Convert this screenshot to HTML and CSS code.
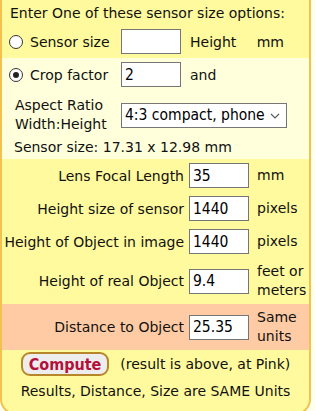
FILE: index.html
```html
<!DOCTYPE html>
<html lang="en">

<head>
    <meta charset="UTF-8">
    <meta name="viewport" content="width=device-width, initial-scale=1.0">
    <title>Distance to Object</title>
    <link rel="stylesheet" href="styles.css">
</head>

<body>
    <form class="calc" autocomplete="off">
        <div class="opts">
            <p class="intro">Enter One of these sensor size options:</p>
            <div class="opt_row">
                <input type="radio" name="mode" class="radio" id="mode_size">
                <label for="mode_size">Sensor size</label>
                <input type="text" class="num" id="sensor_h">
                <span>Height <span class="mm">mm</span></span>
            </div>
        </div>
        <div class="crop">
            <div class="opt_row">
                <input type="radio" name="mode" class="radio" id="mode_crop" checked>
                <label for="mode_crop">Crop factor</label>
                <input type="text" class="num" id="crop" value="2">
                <span>and</span>
            </div>
            <div class="aspect_row">
                <span class="aspect_label">Aspect Ratio<br>Width:Height</span>
                <span class="sel_wrap">
                    <select id="aspect" class="sel">
                        <option>4:3 compact, phone</option>
                        <option>3:2 DSLR</option>
                        <option>16:9 video</option>
                    </select>
                    <svg class="chev" width="10" height="6" viewBox="0 0 10 6"><path d="M1 1 L5 5 L9 1" fill="none" stroke="#555" stroke-width="1.1"/></svg>
                </span>
            </div>
            <p class="sensor_out">Sensor size: 17.31 x 12.98 mm</p>
        </div>
        <table class="calc_table">
            <tr>
                <td class="lbl">Lens Focal Length</td>
                <td class="inp"><input type="text" class="num" value="35"></td>
                <td class="unit">mm</td>
            </tr>
            <tr>
                <td class="lbl">Height size of sensor</td>
                <td class="inp"><input type="text" class="num" value="1440"></td>
                <td class="unit">pixels</td>
            </tr>
            <tr>
                <td class="lbl">Height of Object in image</td>
                <td class="inp"><input type="text" class="num" value="1440"></td>
                <td class="unit">pixels</td>
            </tr>
            <tr class="tall">
                <td class="lbl">Height of real Object</td>
                <td class="inp"><input type="text" class="num" value="9.4"></td>
                <td class="unit">feet or<br>meters</td>
            </tr>
            <tr class="tall result">
                <td class="lbl">Distance to Object</td>
                <td class="inp"><input type="text" class="num" value="25.35"></td>
                <td class="unit">Same<br>units</td>
            </tr>
        </table>
        <div class="compute_row">
            <button type="button" class="compute">Compute</button>
            <span>(result is above, at Pink)</span>
        </div>
        <p class="note">Results, Distance, Size are SAME Units</p>
    </form>
</body>

</html>
```

FILE: styles.css
```css
body {
    margin: 0;
    background: #fffff0;
    font-family: "DejaVu Sans", Verdana, sans-serif;
    font-size: 14px;
    color: #111;
}

p {
    margin: 0;
}

.calc {
    width: 311px;
    box-sizing: border-box;
    background: #fffa9e;
    border: 2px solid #f2c14e;
    border-top: none;
    border-radius: 0 0 16px 16px;
    padding-bottom: 14px;
}

.opts {
    padding: 5px 0 4px 0;
}

.intro {
    line-height: 16px;
    padding-left: 8px;
    margin-bottom: 8px;
}

.opt_row {
    display: grid;
    grid-template-columns: 21px 91px 69px auto;
    align-items: center;
    padding-left: 7px;
    height: 25px;
}

.mm {
    margin-left: 16px;
}

.radio {
    appearance: none;
    margin: 0;
    width: 14px;
    height: 14px;
    border: 1px solid #333;
    border-radius: 50%;
    background: #fff;
    box-sizing: border-box;
    position: relative;
}

.radio:checked::after {
    content: "";
    position: absolute;
    left: 3px;
    top: 3px;
    width: 6px;
    height: 6px;
    border-radius: 50%;
    background: #222;
}

.num {
    width: 60px;
    height: 25px;
    box-sizing: border-box;
    border: 1px solid #767676;
    background: #fff;
    padding: 0 3px;
    margin: 0;
    font-family: "DejaVu Sans Condensed", Tahoma, sans-serif;
    font-size: 15.5px;
    color: #000;
}

.crop {
    background: #ffffdc;
    padding: 4px 0 3px 0;
}

.aspect_row {
    display: flex;
    align-items: center;
    margin-top: 9px;
    padding-left: 13px;
}

.aspect_label {
    width: 106px;
    line-height: 19px;
}

.sel_wrap {
    position: relative;
    display: inline-block;
}

.sel {
    appearance: none;
    width: 166px;
    height: 25px;
    border: 1px solid #767676;
    background: #fff;
    border-radius: 0;
    padding: 0 3px;
    margin: 0;
    font-family: "DejaVu Sans Condensed", Tahoma, sans-serif;
    font-size: 15.5px;
    color: #000;
}

.chev {
    position: absolute;
    right: 7px;
    top: 10px;
    pointer-events: none;
}

.sensor_out {
    padding-left: 12px;
    margin-top: 4px;
    line-height: 18px;
}

.calc_table {
    border-collapse: collapse;
    width: 100%;
}

.calc_table td {
    padding: 4px 0;
    height: 25px;
}

.calc_table .tall td {
    height: 38px;
}

.lbl {
    width: 182px;
    text-align: right;
    padding-right: 5px !important;
}

.inp {
    width: 60px;
}

.inp .num {
    display: block;
}

.unit {
    padding-left: 8px !important;
    line-height: 19px;
}

.result {
    background: #ffcba4;
}

.compute_row {
    display: flex;
    justify-content: center;
    align-items: center;
    gap: 11px;
    margin-top: 2px;
}

.compute {
    height: 24px;
    padding: 0 6px;
    border: 2px solid #b8862a;
    border-radius: 9px;
    background: #eeeded;
    color: #b5103c;
    font-family: "DejaVu Sans Condensed", Tahoma, sans-serif;
    font-weight: bold;
    font-size: 16px;
}

.note {
    text-align: center;
    margin-top: 7px;
    line-height: 16px;
}
```
